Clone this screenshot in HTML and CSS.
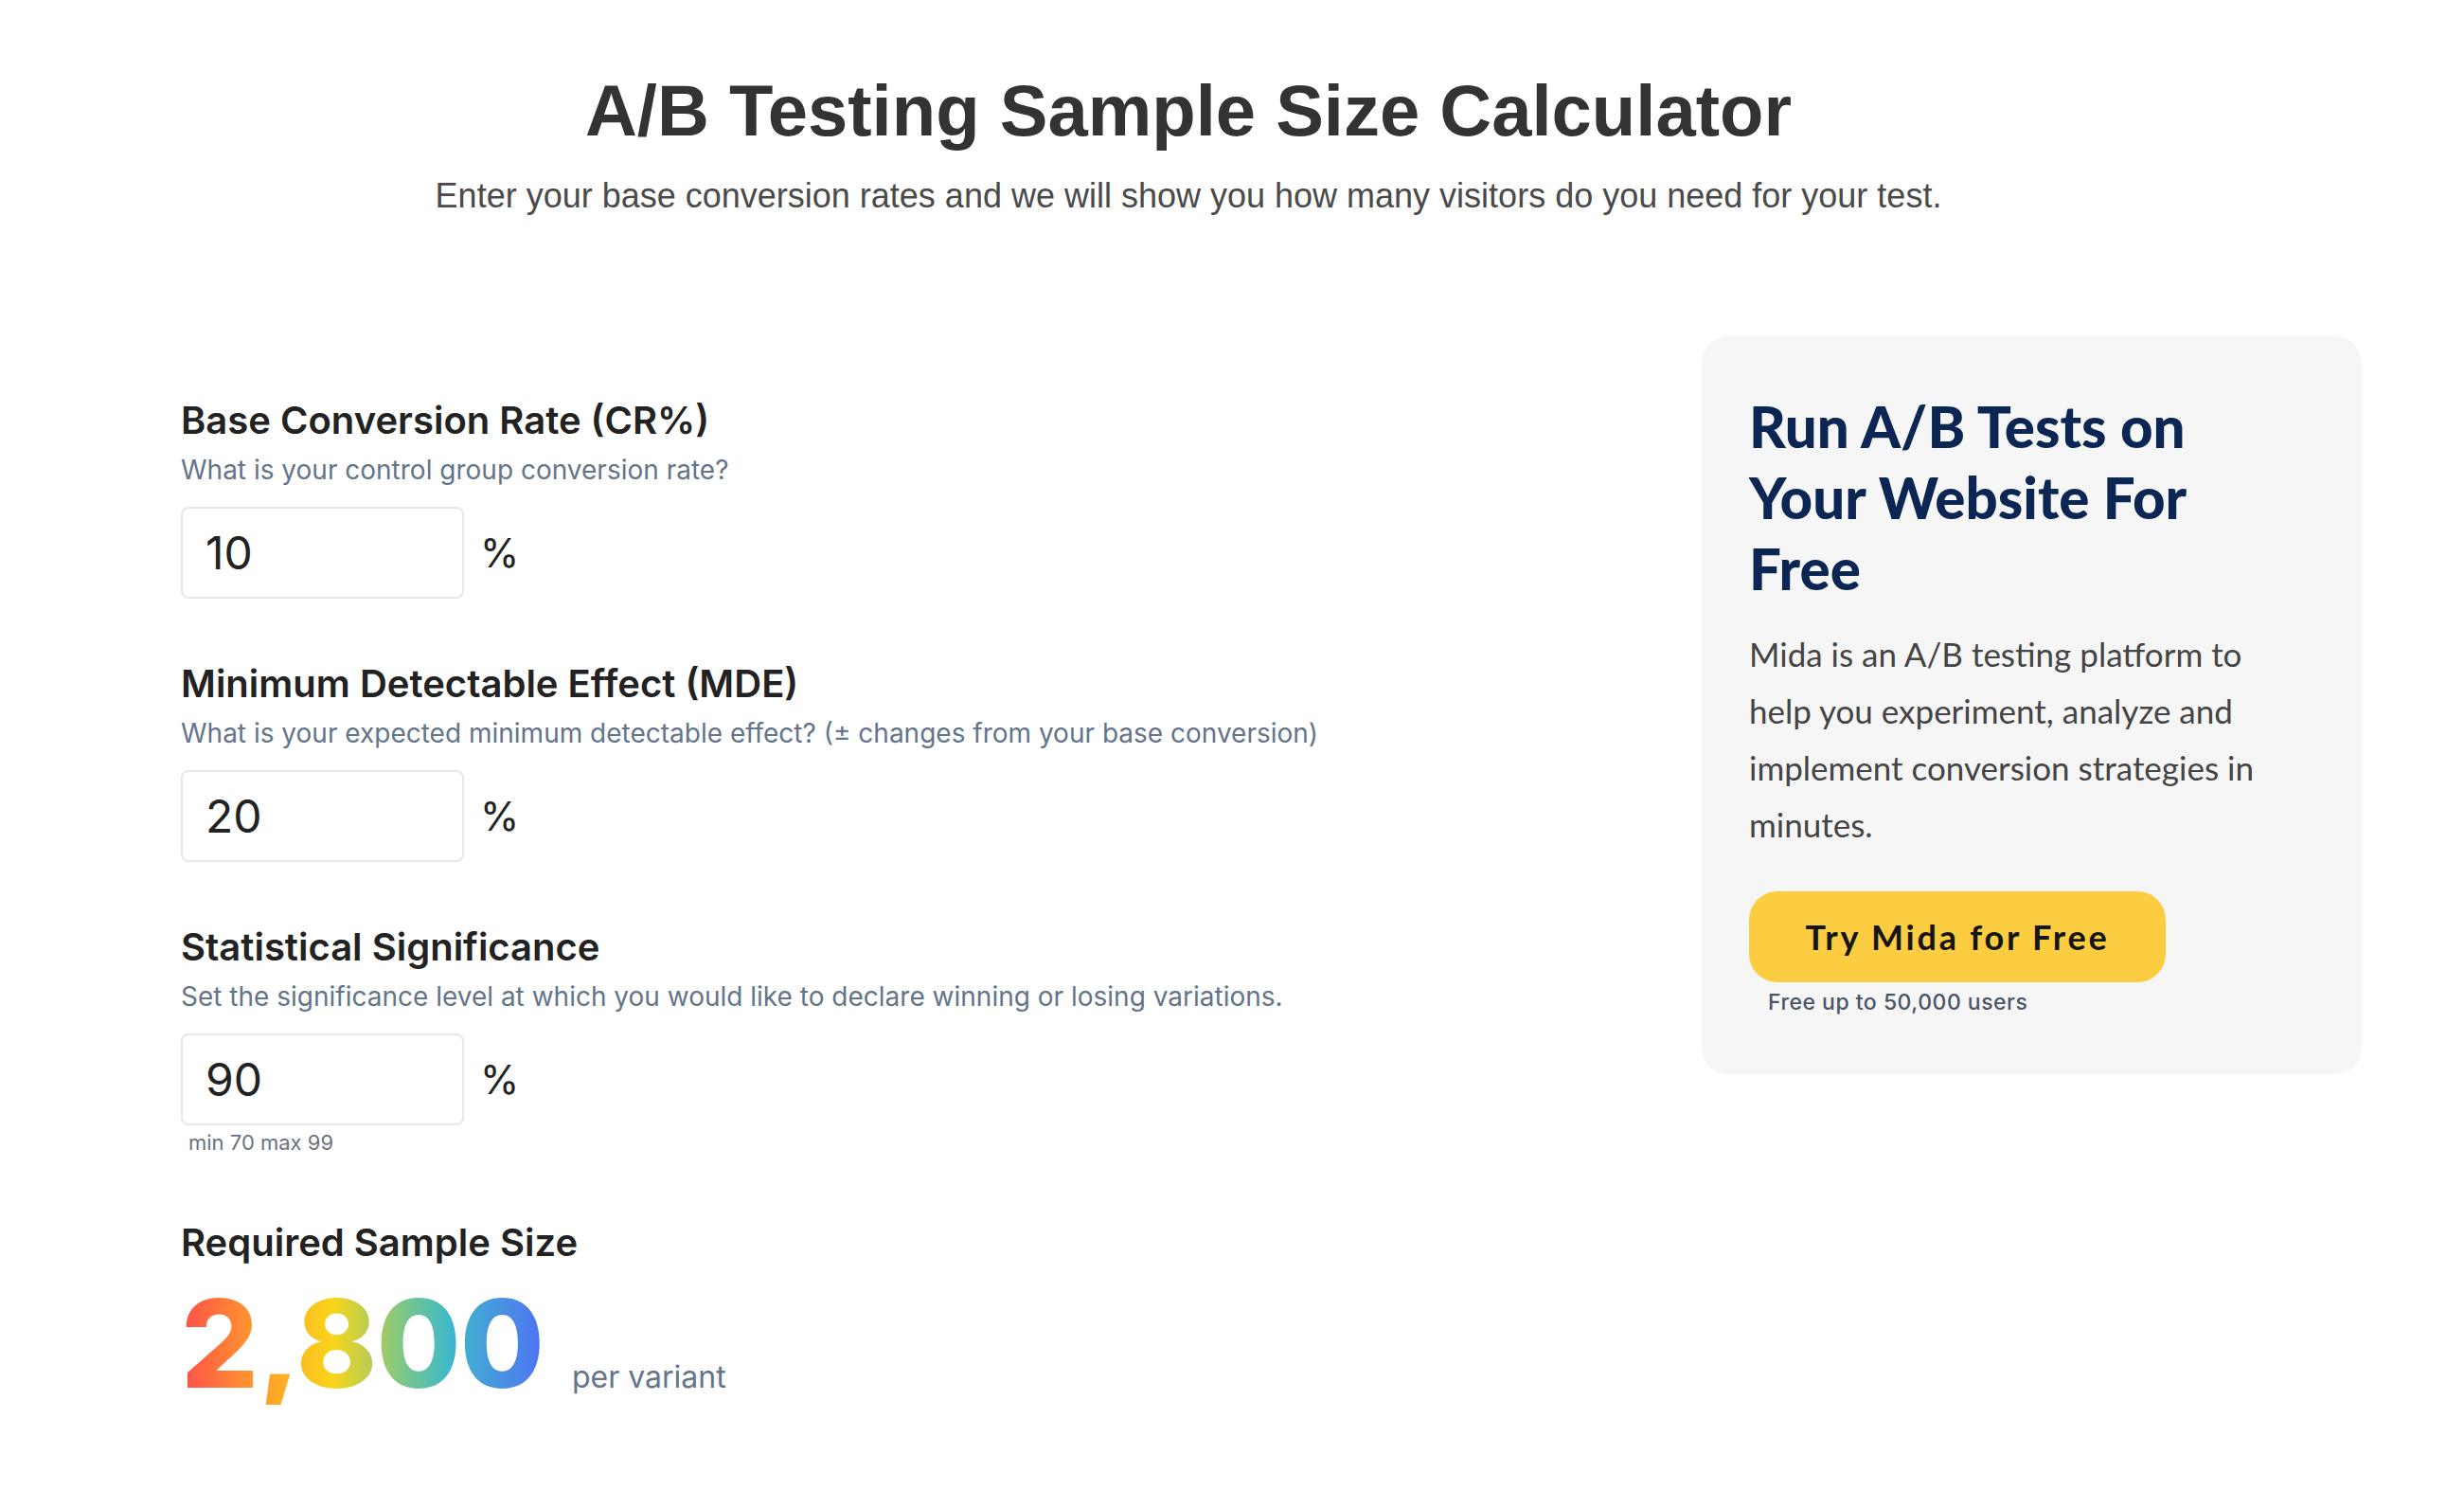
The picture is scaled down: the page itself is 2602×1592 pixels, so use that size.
FILE: index.html
```html
<!DOCTYPE html>
<html lang="en">
<head>
<meta charset="utf-8">
<title>A/B Testing Sample Size Calculator</title>
<link rel="stylesheet" href="styles.css">
</head>
<body>
<header class="hero">
  <h1 class="hero-title">A/B Testing Sample Size Calculator</h1>
  <p class="hero-sub">Enter your base conversion rates and we will show you how many visitors do you need for your test.</p>
</header>
<main class="main">
  <section class="calc">
    <div class="field">
      <h2 class="field-label">Base Conversion Rate (CR%)</h2>
      <p class="field-desc">What is your control group conversion rate?</p>
      <div class="field-row">
        <div class="field-input">10</div>
        <span class="field-unit">%</span>
      </div>
    </div>
    <div class="field">
      <h2 class="field-label">Minimum Detectable Effect (MDE)</h2>
      <p class="field-desc">What is your expected minimum detectable effect? (± changes from your base conversion)</p>
      <div class="field-row">
        <div class="field-input">20</div>
        <span class="field-unit">%</span>
      </div>
    </div>
    <div class="field field-last">
      <h2 class="field-label">Statistical Significance</h2>
      <p class="field-desc">Set the significance level at which you would like to declare winning or losing variations.</p>
      <div class="field-row">
        <div class="field-input">90</div>
        <span class="field-unit">%</span>
      </div>
      <p class="field-hint">min 70 max 99</p>
    </div>
    <div class="result">
      <h2 class="field-label">Required Sample Size</h2>
      <div class="result-row">
        <span class="result-num">2,800</span>
        <span class="result-unit">per variant</span>
      </div>
    </div>
  </section>
  <aside class="promo">
    <h3 class="promo-title">Run A/B Tests on Your Website For Free</h3>
    <p class="promo-text">Mida is an A/B testing platform to help you experiment, analyze and implement conversion strategies in minutes.</p>
    <a class="promo-btn" href="#">Try Mida for Free</a>
    <p class="promo-note">Free up to 50,000 users</p>
  </aside>
</main>
</body>
</html>
```
FILE: styles.css
```css
* { box-sizing: border-box; }
html, body { margin: 0; padding: 0; background: #ffffff; }
body { font-family: "Inter", "Liberation Sans", sans-serif; color: #222; }

.hero { text-align: center; padding: 71px 92px 0 0; }
.hero-title {
  margin: 0;
  font-family: "Liberation Sans", Arial, sans-serif;
  font-weight: 700;
  font-size: 76px;
  line-height: 91px;
  color: #333333;
}
.hero-sub {
  margin: 23px 0 0;
  font-family: "Liberation Sans", Arial, sans-serif;
  font-size: 36px;
  line-height: 43px;
  color: #4a4a4a;
}

.main {
  display: grid;
  grid-template-columns: 1fr 697px;
  padding: 0 108px 0 191px;
  margin-top: 127px;
  align-items: start;
}

.calc { padding-top: 67px; }
.field { margin-bottom: 68px; }
.field-last { margin-bottom: 72px; }
.field-label {
  margin: 0;
  font-size: 40px;
  line-height: 43px;
  font-weight: 600;
  color: #222;
}
.field-desc {
  margin: 14px 0 0;
  font-size: 28px;
  line-height: 34px;
  color: #64748b;
}
.field-row { display: flex; align-items: center; margin-top: 22px; }
.field-input {
  width: 299px;
  height: 97px;
  border: 2px solid #e6e7e9;
  border-radius: 8px;
  padding-left: 24px;
  display: flex;
  align-items: center;
  font-size: 48px;
  color: #222;
}
.field-unit { margin-left: 17px; font-size: 42px; color: #222; }
.field-hint {
  margin: 6px 0 0 8px;
  font-size: 22px;
  line-height: 24px;
  color: #6b7280;
}

.result-row { display: flex; align-items: baseline; margin-top: 21px; }
.result-num {
  font-size: 129px;
  line-height: 1;
  font-weight: 800;
  letter-spacing: -1px;
  background: linear-gradient(90deg, #ff4f4a 0%, #ff9d2b 22%, #f8d51a 42%, #78c68c 62%, #3fb9c9 74%, #4f72f5 100%);
  -webkit-background-clip: text;
  background-clip: text;
  color: transparent;
}
.result-unit { margin-left: 30px; font-size: 32px; color: #64748b; }

.promo {
  background: #f6f6f7;
  border-radius: 28px;
  padding: 58px 90px 62px 50px;
}
.promo-title {
  margin: 0;
  font-family: "Lato", sans-serif;
  font-weight: 900;
  font-size: 60px;
  line-height: 75px;
  color: #0b2653;
}
.promo-text {
  margin: 22px 0 0;
  font-family: "Lato", sans-serif;
  font-weight: 400;
  font-size: 35px;
  line-height: 60px;
  color: #444;
}
.promo-btn {
  display: flex;
  align-items: center;
  justify-content: center;
  width: 440px;
  height: 96px;
  margin-top: 41px;
  background: #fccd41;
  border-radius: 30px;
  font-family: "Lato", sans-serif;
  font-weight: 700;
  font-size: 36px;
  letter-spacing: 2.8px;
  color: #151515;
  text-decoration: none;
}
.promo-note {
  margin: 7px 0 0 20px;
  font-size: 23px;
  line-height: 28px;
  font-weight: 500;
  letter-spacing: 0.5px;
  color: #4a5568;
}
```
